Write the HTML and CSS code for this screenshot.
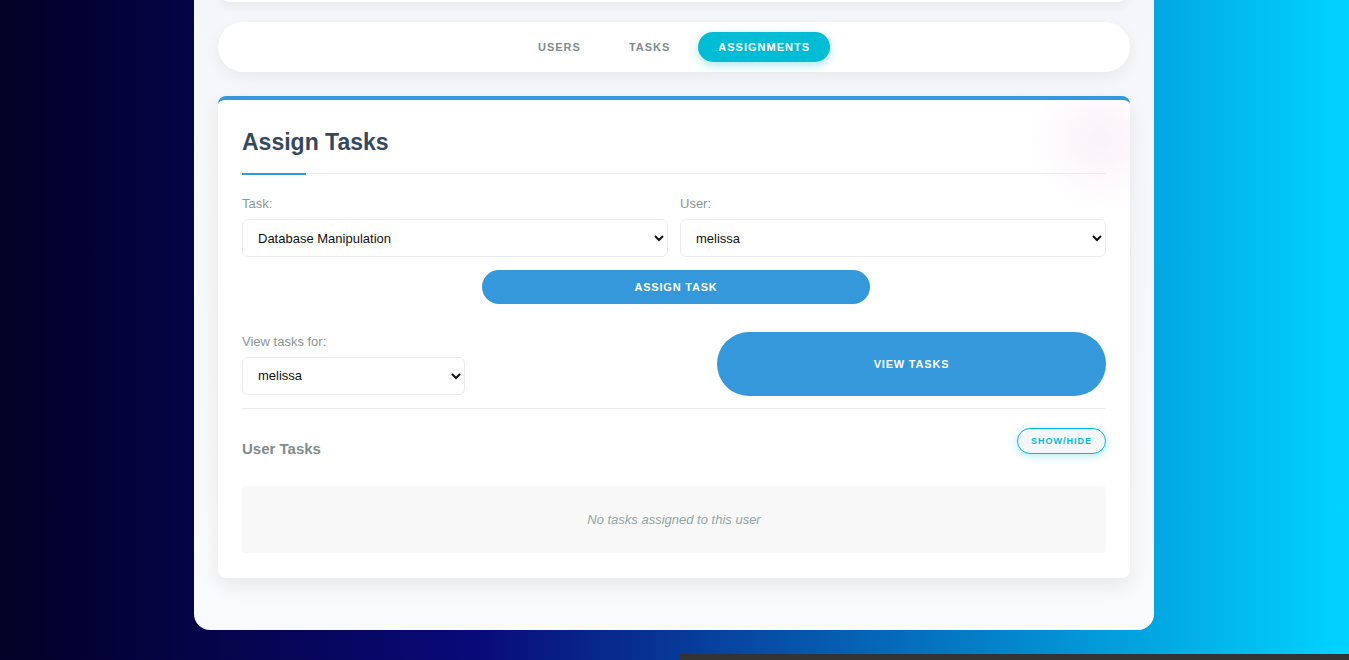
FILE: index.html
```html
<!DOCTYPE html>
<html lang="en">
<head>
<meta charset="utf-8">
<title>Assignments</title>
<link rel="stylesheet" href="styles.css">
</head>
<body>
<div class="container">
  <div class="card-stub"></div>
  <nav class="tabs">
    <button class="tab">USERS</button>
    <button class="tab">TASKS</button>
    <button class="tab active">ASSIGNMENTS</button>
  </nav>
  <section class="card">
    <h2 class="card-title">Assign Tasks</h2>
    <div class="grid2">
      <div class="field">
        <label class="label">Task:</label>
        <select class="select"><option>Database Manipulation</option></select>
      </div>
      <div class="field">
        <label class="label">User:</label>
        <select class="select"><option>melissa</option></select>
      </div>
    </div>
    <div class="center-row">
      <button class="btn btn-assign">ASSIGN TASK</button>
    </div>
    <div class="view-row">
      <div class="field view-field">
        <label class="label">View tasks for:</label>
        <select class="select"><option>melissa</option></select>
      </div>
      <button class="btn btn-view">VIEW TASKS</button>
    </div>
    <div class="tasks-head">
      <h3 class="sub-title">User Tasks</h3>
      <button class="btn-outline">SHOW/HIDE</button>
    </div>
    <div class="empty">No tasks assigned to this user</div>
  </section>
</div>
<div class="footer-strip"><div class="strip-space"></div><div class="strip-bar"></div></div>
</body>
</html>
```
FILE: styles.css
```css
* { box-sizing: border-box; }
html, body { margin: 0; padding: 0; height: 100%; }
body {
  font-family: "Liberation Sans", Arial, sans-serif;
  background: linear-gradient(90deg, #020024 0%, #090979 35%, #00d4ff 100%);
  overflow: hidden;
  display: flex;
  flex-direction: column;
}
.container {
  width: 960px;
  margin: -40px 0 0 194px;
  padding: 0 24px 52px;
  background: linear-gradient(180deg, #f5f6fa 0%, #f9fafc 100%);
  border-radius: 0 0 16px 16px;
  flex: none;
}
.card-stub {
  height: 42px;
  background: #fff;
  border-radius: 0 0 12px 12px;
  box-shadow: 0 4px 10px rgba(0,0,0,0.06);
  margin-bottom: 20px;
}
.tabs {
  height: 50px;
  background: #fff;
  border-radius: 25px;
  box-shadow: 0 5px 15px rgba(0,0,0,0.06);
  display: flex;
  justify-content: center;
  align-items: center;
  gap: 8px;
  margin-bottom: 24px;
}
.tab {
  font-family: inherit;
  border: none;
  background: transparent;
  color: #7f8c8d;
  font-weight: 700;
  font-size: 11px;
  letter-spacing: 1px;
  padding: 0 20px;
  height: 30px;
  border-radius: 15px;
  cursor: pointer;
}
.tab.active {
  background: #00bcd4;
  color: #fff;
  box-shadow: 0 3px 10px rgba(0,188,212,0.35);
}
.card {
  position: relative;
  overflow: hidden;
  background: #fff;
  border-top: 4px solid #3498db;
  border-radius: 8px;
  padding: 24px 24px 25px;
  box-shadow: 0 8px 20px rgba(0,0,0,0.07);
}
.card::before {
  content: "";
  position: absolute;
  right: -40px;
  top: -30px;
  width: 140px;
  height: 140px;
  border-radius: 50%;
  background: radial-gradient(circle, rgba(210,120,200,0.10) 0%, rgba(210,120,200,0.04) 45%, rgba(255,255,255,0) 70%);
  pointer-events: none;
}
.card-title {
  position: relative;
  margin: 0 0 22px;
  font-size: 23px;
  font-weight: 700;
  color: #34495e;
  line-height: 34px;
  padding: 1px 0 14px;
  border-bottom: 1px solid #ececec;
}
.card-title::after {
  content: "";
  position: absolute;
  left: 0;
  bottom: -2px;
  width: 64px;
  height: 2px;
  background: #3498db;
}
.grid2 {
  display: grid;
  grid-template-columns: 1fr 1fr;
  gap: 12px;
}
.field { display: flex; flex-direction: column; gap: 8px; }
.label {
  font-size: 13px;
  color: #8a9597;
  line-height: 15px;
}
.select {
  font-family: "Liberation Sans", Arial, sans-serif;
  font-size: 13px;
  color: #111;
  height: 38px;
  padding: 0 10px 0 11px;
  border: 1px solid #ececec;
  border-radius: 6px;
  background: #fff;
}
.center-row {
  display: flex;
  justify-content: center;
  margin-top: 13px;
  padding-left: 4px;
}
.btn {
  font-family: inherit;
  border: none;
  background: #3498db;
  color: #fff;
  font-weight: 700;
  font-size: 11px;
  letter-spacing: 0.8px;
  cursor: pointer;
}
.btn-assign {
  width: 388px;
  height: 34px;
  border-radius: 17px;
}
.view-row {
  display: flex;
  justify-content: space-between;
  align-items: center;
  margin-top: 28px;
  padding-bottom: 12px;
  border-bottom: 1px solid #ececec;
}
.view-field { width: 223px; }
.btn-view {
  width: 389px;
  height: 64px;
  border-radius: 32px;
}
.tasks-head {
  display: flex;
  justify-content: space-between;
  align-items: center;
  padding-top: 15px;
}
.sub-title {
  margin: 16px 0 0;
  font-size: 15px;
  color: #7f8c8d;
  font-weight: 700;
}
.btn-outline {
  font-family: inherit;
  background: #f5f6fa;
  border: 1px solid #00bcd4;
  color: #00bcd4;
  font-weight: 700;
  font-size: 9px;
  letter-spacing: 1px;
  height: 26px;
  width: 89px;
  border-radius: 13px;
  padding: 0;
  box-shadow: 0 2px 8px rgba(0,188,212,0.3);
}
.empty {
  margin-top: 29px;
  height: 67px;
  background: #f8f8f8;
  border-radius: 4px;
  display: flex;
  align-items: center;
  justify-content: center;
  font-style: italic;
  font-size: 13px;
  color: #95a5a6;
}
.footer-strip {
  margin-top: auto;
  height: 6px;
  display: flex;
}
.strip-space { width: 680px; }
.strip-bar { flex: 1; background: #333; }
```
